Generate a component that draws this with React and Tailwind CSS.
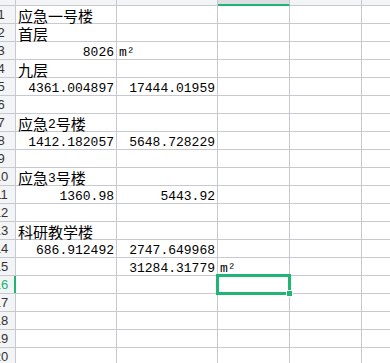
import React from "react";

const line = "border-[#c7c9d0]";
const green = "#21b573";

const Cjk = ({ children }) => (
  <span className="font-['Noto_Sans_CJK_SC',sans-serif] text-[15px] leading-[15px]">{children}</span>
);
const Mono = ({ children }) => (
  <span className="font-['Liberation_Mono',monospace] text-[13px] leading-[13px]">{children}</span>
);

const txt = (node) => ({ node, right: false });
const num = (s) => ({ node: <Mono>{s}</Mono>, right: true });
const unit = () => ({ node: <Mono>m²</Mono>, right: false });

// cells per row: [A, B, C]
const rows = [
  [txt(<Cjk>应急一号楼</Cjk>)],
  [txt(<Cjk>首层</Cjk>)],
  [num("8026"), unit()],
  [txt(<Cjk>九层</Cjk>)],
  [num("4361.004897"), num("17444.01959")],
  [],
  [txt(<><Cjk>应急</Cjk><Mono>2</Mono><Cjk>号楼</Cjk></>)],
  [num("1412.182057"), num("5648.728229")],
  [],
  [txt(<><Cjk>应急</Cjk><Mono>3</Mono><Cjk>号楼</Cjk></>)],
  [num("1360.98"), num("5443.92")],
  [],
  [txt(<Cjk>科研教学楼</Cjk>)],
  [num("686.912492"), num("2747.649968")],
  [null, num("31284.31779"), unit()],
  [],
  [],
  [],
  [],
  [],
];

const widths = ["w-[101px]", "w-[101px]", "w-[72px]", "w-[72px]"];

function Cell({ value, width, selected }) {
  return (
    <div
      className={`relative ${width} h-full shrink-0 border-r ${line} flex items-end ${
        value?.right ? "justify-end pr-[2px]" : "justify-start pl-[2px]"
      } whitespace-nowrap text-black`}
    >
      {value?.node}
      {selected && (
        <div className="absolute left-[-2px] top-[-2px] w-[75px] h-[21px] border-[3px] border-[#21b573] z-10">
          <div className="absolute right-[-5px] bottom-[-5px] w-[7px] h-[7px] bg-[#21b573] border border-white" />
        </div>
      )}
    </div>
  );
}

export default function App() {
  return (
    <div className="w-[390px] h-[363px] overflow-hidden bg-white select-none">
      {/* column headers */}
      <div className="flex h-[6px]">
        <div className={`w-[16px] shrink-0 bg-[#f3f4f6] border-r border-b ${line}`} />
        <div className={`w-[101px] shrink-0 bg-[#f3f4f6] border-r border-b ${line}`} />
        <div className={`w-[101px] shrink-0 bg-[#f3f4f6] border-r border-b ${line}`} />
        <div className={`w-[72px] shrink-0 bg-[#dcdee2] border-r ${line} border-b-2 border-b-[#21b573]`} />
        <div className={`w-[72px] shrink-0 bg-[#f3f4f6] border-r border-b ${line}`} />
        <div className={`flex-1 bg-[#f3f4f6] border-b ${line}`} />
      </div>

      {rows.map((cells, i) => {
        const n = i + 1;
        const active = n === 16;
        return (
          <div key={n} className={`flex h-[18px] border-b ${line}`}>
            <div
              className={`relative w-[16px] shrink-0 overflow-hidden bg-[#f3f4f6] ${
                active ? "border-r-2 border-r-[#21b573]" : `border-r ${line}`
              }`}
            >
              <div
                className={`ml-[-14px] w-[30px] text-center font-['Liberation_Sans',sans-serif] text-[13px] leading-[17px] ${
                  active ? "text-[#21b573]" : "text-[#333]"
                }`}
              >
                {n}
              </div>
            </div>
            {widths.map((w, j) => (
              <Cell key={j} width={w} value={cells[j]} selected={active && j === 2} />
            ))}
            <div className="flex-1" />
          </div>
        );
      })}
    </div>
  );
}
